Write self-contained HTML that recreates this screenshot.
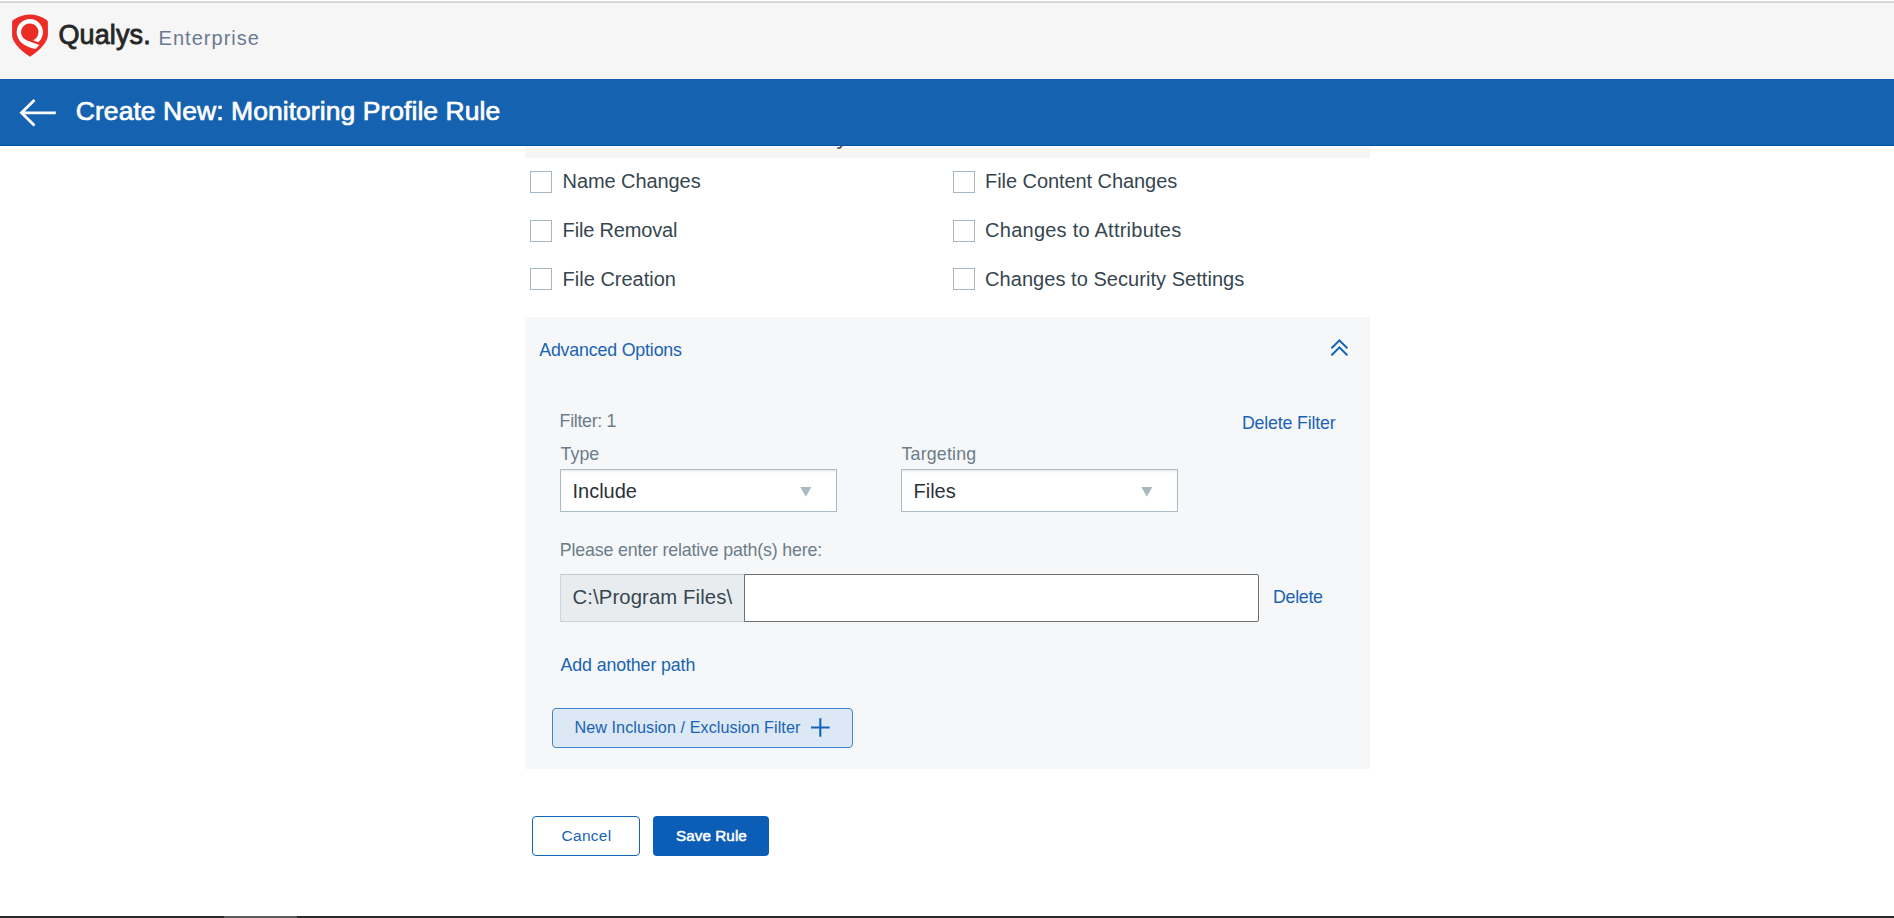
<!DOCTYPE html>
<html><head><meta charset="utf-8">
<style>
*{box-sizing:border-box;margin:0;padding:0}
html,body{width:1894px;height:918px;overflow:hidden;background:#fff;font-family:"Liberation Sans",sans-serif}
.a{position:absolute;white-space:nowrap;line-height:1}
.cb{position:absolute;width:22px;height:22px;border:1px solid #a8b8c2;background:#fff}
.sel{position:absolute;width:277px;height:43px;background:#fff;border:1px solid #adbbc4;box-shadow:inset 0 2px 2px rgba(0,0,0,0.07)}
</style></head><body>
<div class="a" style="left:0;top:0;width:1894px;height:79px;background:#f6f6f6"></div>
<div class="a" style="left:0;top:0;width:1894px;height:1px;background:#fff"></div>
<div class="a" style="left:0;top:1px;width:1894px;height:2px;background:#d7d8dc"></div>
<svg class="a" style="left:8px;top:10px" width="46" height="50" viewBox="0 0 46 50">
<path d="M4.1,12.2 C4.1,10.8 4.8,10.1 6,9.4 Q22,-0.3 38,9.4 C39.2,10.1 39.9,10.8 39.9,12.2 L39.9,25 C39.9,31.5 33,39.5 22,46.8 C11,39.5 4.1,31.5 4.1,25 Z" fill="#ec2c27"/>
<path d="M30.14,32.2 A13.1,13.1 0 1 0 9.9,27.6 C12,33.5 18.5,37.3 27.6,39 L31.4,35.1 L19.1,30.4 A8.7,8.7 0 1 1 25.0,30.2 Z" fill="#fff"/>
</svg>
<div class="a " style="left:58.5px;top:22.04px;font-size:27px;color:#262626;-webkit-text-stroke:0.85px #262626;letter-spacing:0.1px">Qualys.</div>
<div class="a " style="left:158.6px;top:27.97px;font-size:20px;color:#6b7a8f;letter-spacing:1.02px">Enterprise</div>
<div class="a" style="left:0;top:79px;width:1894px;height:67px;background:#1562b0;border-top:1px solid #0e58a8;border-bottom:1px solid #0052a6"></div>
<svg class="a" style="left:0;top:79px" width="70" height="67" viewBox="0 79 70 67"><path d="M34.5,100 L21.5,112.8 L34.5,125.6 M21.5,112.8 L55.8,112.8" fill="none" stroke="#fff" stroke-width="2.8" stroke-linecap="butt"/></svg>
<div class="a " style="left:75.8px;top:98.07px;font-size:26.5px;color:#fff;-webkit-text-stroke:0.7px #fff;letter-spacing:0.05px">Create New: Monitoring Profile Rule</div>
<div class="a" style="left:525px;top:147px;width:845px;height:11px;background:#f6f6f6"></div>
<svg class="a" style="left:834px;top:144px" width="10" height="6" viewBox="0 0 10 6"><path d="M4,4.1 Q6.3,4.5 7.6,2" fill="none" stroke="#4a5a66" stroke-width="1.8" stroke-linecap="round"/></svg>
<div class="cb" style="left:530px;top:171px"></div>
<div class="a " style="left:562.6px;top:171.07px;font-size:20px;color:#36464f;letter-spacing:-0.082px">Name Changes</div>
<div class="cb" style="left:953px;top:171px"></div>
<div class="a " style="left:985.1px;top:171.07px;font-size:20px;color:#36464f;letter-spacing:-0.069px">File Content Changes</div>
<div class="cb" style="left:530px;top:220px"></div>
<div class="a " style="left:562.6px;top:220.07px;font-size:20px;color:#36464f;letter-spacing:-0.164px">File Removal</div>
<div class="cb" style="left:953px;top:220px"></div>
<div class="a " style="left:985.1px;top:220.07px;font-size:20px;color:#36464f;letter-spacing:0.243px">Changes to Attributes</div>
<div class="cb" style="left:530px;top:268px"></div>
<div class="a " style="left:562.6px;top:269.07px;font-size:20px;color:#36464f;letter-spacing:0.000px">File Creation</div>
<div class="cb" style="left:953px;top:268px"></div>
<div class="a " style="left:985.1px;top:269.07px;font-size:20px;color:#36464f;letter-spacing:0.046px">Changes to Security Settings</div>
<div class="a" style="left:525px;top:317px;width:845px;height:452px;background:#f5f7f9"></div>
<div class="a " style="left:539.2px;top:342.23px;font-size:17.8px;color:#1a63b3;letter-spacing:-0.168px">Advanced Options</div>
<svg class="a" style="left:1326px;top:334px" width="28" height="26" viewBox="1326 334 28 26"><path d="M1332,347.8 L1339.4,340.4 L1346.8,347.8 M1332,354.8 L1339.4,347.4 L1346.8,354.8" fill="none" stroke="#1563b5" stroke-width="2" stroke-linecap="round" stroke-linejoin="miter"/></svg>
<div class="a " style="left:559.6px;top:412.73px;font-size:17.8px;color:#6c7d89;letter-spacing:-0.296px">Filter: 1</div>
<div class="a " style="left:1241.9px;top:414.53px;font-size:17.8px;color:#1a63b3;letter-spacing:-0.165px">Delete Filter</div>
<div class="a " style="left:560.5px;top:445.93px;font-size:17.8px;color:#6c7d89;letter-spacing:0.060px">Type</div>
<div class="a " style="left:901.5px;top:445.93px;font-size:17.8px;color:#6c7d89;letter-spacing:0.182px">Targeting</div>
<div class="sel" style="left:560px;top:469px"></div>
<div class="a " style="left:572.5px;top:480.97px;font-size:20px;color:#2c3137">Include</div>
<svg class="a" style="left:800px;top:487px" width="12" height="10" viewBox="0 0 12 10"><path d="M0.3,0 L11.4,0 L5.85,9.7 Z" fill="#aab8c1"/></svg>
<div class="sel" style="left:901px;top:469px"></div>
<div class="a " style="left:913.5px;top:480.97px;font-size:20px;color:#2c3137">Files</div>
<svg class="a" style="left:1141px;top:487px" width="12" height="10" viewBox="0 0 12 10"><path d="M0.3,0 L11.4,0 L5.85,9.7 Z" fill="#aab8c1"/></svg>
<div class="a " style="left:559.7px;top:541.93px;font-size:17.8px;color:#6c7d89;letter-spacing:-0.155px">Please enter relative path(s) here:</div>
<div class="a" style="left:560px;top:574px;width:185px;height:48px;background:#e9ecef;border:1px solid #ced4da;border-right:none;border-top-color:#c4c9ce"></div>
<div class="a " style="left:572.5px;top:587.22px;font-size:20.3px;color:#36464f;letter-spacing:0.112px">C:\Program Files\</div>
<div class="a" style="left:744px;top:574px;width:515px;height:48px;background:#fff;border:1px solid #6f6f6f;border-radius:0 2px 2px 0"></div>
<div class="a " style="left:1273px;top:588.73px;font-size:17.8px;color:#1a63b3;letter-spacing:-0.288px">Delete</div>
<div class="a " style="left:560.5px;top:657.23px;font-size:17.8px;color:#1a63b3;letter-spacing:-0.108px">Add another path</div>
<div class="a" style="left:552px;top:708px;width:301px;height:40px;background:#dce8f5;border:1px solid #4485cf;border-radius:4px"></div>
<div class="a " style="left:574.4px;top:719.19px;font-size:16.2px;color:#1a63b3;letter-spacing:0.063px">New Inclusion / Exclusion Filter</div>
<svg class="a" style="left:808px;top:715px" width="25" height="25" viewBox="808 715 25 25"><path d="M820.3,718.2 L820.3,736.8 M811,727.5 L829.6,727.5" stroke="#1563b5" stroke-width="2.1"/></svg>
<div class="a" style="left:532px;top:816px;width:108px;height:40px;background:#fff;border:1.3px solid #1563b8;border-radius:4px"></div>
<div class="a " style="left:561.5px;top:827.78px;font-size:15.5px;color:#1a63b3;letter-spacing:0.288px">Cancel</div>
<div class="a" style="left:653px;top:816px;width:116px;height:40px;background:#0b5db5;border-radius:4px"></div>
<div class="a " style="left:676px;top:828.03px;font-size:15.2px;color:#fff;-webkit-text-stroke:0.5px #fff;letter-spacing:0.090px">Save Rule</div>
<div class="a" style="left:0;top:916px;width:1894px;height:2px;background:#2a2a2a"></div>
<div class="a" style="left:224px;top:916px;width:73px;height:2px;background:#5c5c5c"></div>
</body></html>
